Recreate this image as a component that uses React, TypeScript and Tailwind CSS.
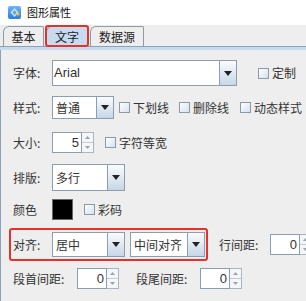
import React from 'react';

const font = { fontFamily: '"Noto Sans CJK SC", "Liberation Sans", sans-serif' };

function Arrow() {
  return (
    <svg width="8" height="5" viewBox="0 0 8 5">
      <path d="M0 0 H8 L4 5 Z" fill="#222" />
    </svg>
  );
}

function Combo({ text, width, height, arrowW = 17 }: { text: string; width: number; height: number; arrowW?: number }) {
  return (
    <div
      className="flex border border-[#8d9db0] bg-white"
      style={{ width, height }}
    >
      <div className="flex-1 flex items-center pl-[3px] text-[12px] text-[#333] leading-none">{text}</div>
      <div
        className="flex items-center justify-center border-l border-[#8d9db0] bg-gradient-to-b from-[#fafcfe] to-[#c7d6e6]"
        style={{ width: arrowW }}
      >
        <Arrow />
      </div>
    </div>
  );
}

function Check({ label }: { label: string }) {
  return (
    <div className="flex items-center gap-[3px]">
      <div className="w-[11px] h-[11px] border border-[#8a9aab] bg-gradient-to-br from-white to-[#d5e1ee]" />
      <span className="text-[12px] text-[#333] leading-none">{label}</span>
    </div>
  );
}

function Spinner({ value, inputW }: { value: string; inputW: number }) {
  return (
    <div className="flex h-[21px]">
      <div
        className="flex items-center justify-end pr-[2px] bg-white border border-[#8d9db0] text-[13px] text-[#333] leading-none"
        style={{ width: inputW, fontFamily: '"Liberation Sans", sans-serif' }}
      >
        {value}
      </div>
      <div className="flex flex-col w-[12px] border border-l-0 border-[#a9b5c2]">
        <div className="flex-1 flex items-center justify-center bg-[#f4f6f8] border-b border-[#c3ccd6]">
          <svg width="5" height="3" viewBox="0 0 5 3"><path d="M0 3 L2.5 0 L5 3 Z" fill="#9aa4ae" /></svg>
        </div>
        <div className="flex-1 flex items-center justify-center bg-[#f4f6f8]">
          <svg width="5" height="3" viewBox="0 0 5 3"><path d="M0 0 H5 L2.5 3 Z" fill="#9aa4ae" /></svg>
        </div>
      </div>
    </div>
  );
}

function Label({ children, w = 39 }: { children: React.ReactNode; w?: number }) {
  return (
    <div className="text-[12px] text-[#333] leading-none shrink-0" style={{ width: w }}>
      {children}
    </div>
  );
}

function Tab({ text, active, width }: { text: string; active?: boolean; width: number }) {
  return (
    <div
      className={`relative flex items-center justify-center h-[20px] border border-b-0 border-[#8e9aa7] rounded-tl-[6px] rounded-tr-[2px] text-[12px] leading-none text-[#222] ${
        active ? 'bg-[#c6dbf0]' : 'bg-[#eeeeee]'
      }`}
      style={{ width }}
    >
      {text}
      {active && (
        <div className="absolute -left-[2px] -top-[2px] -right-[2px] -bottom-[1px] border-2 border-[#e8302b] rounded-[3px]" />
      )}
    </div>
  );
}

export default function App() {
  return (
    <div className="w-[306px] h-[301px] overflow-hidden bg-[#eeeeee] flex flex-col" style={font}>
      {/* title */}
      <div className="h-[25px] bg-white flex items-center pl-[8px] gap-[6px] shrink-0">
        <svg width="13" height="13" viewBox="0 0 13 13">
          <defs>
            <linearGradient id="ig" x1="0" y1="0" x2="0" y2="1">
              <stop offset="0" stopColor="#6fb4f5" />
              <stop offset="1" stopColor="#2a7fe0" />
            </linearGradient>
          </defs>
          <rect x="0" y="0" width="13" height="13" rx="2" fill="url(#ig)" />
          <path d="M6.5 2 L10.5 6.5 L6.5 11 L2.5 6.5 Z" fill="#cfe6fb" />
          <path d="M6.5 4 L8.5 6.5 L6.5 9 L4.5 6.5 Z" fill="#5aa2ec" />
          <circle cx="10" cy="8" r="1.6" fill="#f4c21c" />
        </svg>
        <span className="text-[11px] text-[#111] leading-none">图形属性</span>
      </div>

      {/* tabs */}
      <div className="flex items-end h-[22px] pl-[3px] gap-[2px] shrink-0 border-b border-[#8ea0b5]">
        <Tab text="基本" width={41} />
        <Tab text="文字" active width={42} />
        <Tab text="数据源" width={54} />
      </div>
      <div className="h-[3px] bg-[#c6dbf0] shrink-0" />

      {/* content */}
      <div className="flex-1 flex flex-col border-l border-[#8ea0b5]">
        <div className="flex items-center h-[26px] mt-[10px] pl-[12px]">
          <Label>字体:</Label>
          <div className="flex h-[26px] w-[185px] border border-[#8d9db0] bg-white">
            <div
              className="flex-1 flex items-center pl-[1px] text-[13px] text-[#333]"
              style={{ fontFamily: '"Liberation Sans", sans-serif' }}
            >
              Arial
            </div>
            <div className="w-[17px] flex items-center justify-center border-l border-[#8d9db0] bg-gradient-to-b from-[#fafcfe] to-[#c7d6e6]">
              <Arrow />
            </div>
          </div>
          <div className="ml-[21px]">
            <Check label="定制" />
          </div>
        </div>

        <div className="flex items-center h-[23px] mt-[10px] pl-[12px]">
          <Label>样式:</Label>
          <Combo text="普通" width={62} height={23} />
          <div className="ml-[5px]"><Check label="下划线" /></div>
          <div className="ml-[10px]"><Check label="删除线" /></div>
          <div className="ml-[11px]"><Check label="动态样式" /></div>
        </div>

        <div className="flex items-center h-[21px] mt-[13px] pl-[12px]">
          <Label>大小:</Label>
          <Spinner value="5" inputW={30} />
          <div className="ml-[11px]"><Check label="字符等宽" /></div>
        </div>

        <div className="flex items-center h-[27px] mt-[11px] pl-[12px]">
          <Label>排版:</Label>
          <Combo text="多行" width={73} height={27} />
        </div>

        <div className="flex items-center h-[21px] mt-[8px] pl-[12px]">
          <Label>颜色</Label>
          <div className="w-[21px] h-[21px] bg-black border border-[#666]" />
          <div className="ml-[11px]"><Check label="彩码" /></div>
        </div>

        <div className="flex items-center h-[25px] mt-[12px] pl-[12px]">
          <div className="relative flex items-center h-[25px]">
            <Label>对齐:</Label>
            <Combo text="居中" width={73} height={25} />
            <div className="ml-[5px]">
              <Combo text="中间对齐" width={75} height={25} />
            </div>
            <div className="absolute -left-[4px] -top-[4px] -right-[3px] -bottom-[4px] border-2 border-[#e8302b] rounded-[3px]" />
          </div>
          <div className="ml-[14px] text-[12px] text-[#333] leading-none shrink-0 w-[51px]">行间距:</div>
          <Spinner value="0" inputW={30} />
        </div>

        <div className="flex items-center h-[21px] mt-[11px] pl-[12px]">
          <Label w={64}>段首间距:</Label>
          <Spinner value="0" inputW={30} />
          <div className="ml-[17px] text-[12px] text-[#333] leading-none shrink-0 w-[64px]">段尾间距:</div>
          <Spinner value="0" inputW={30} />
        </div>
      </div>
    </div>
  );
}
